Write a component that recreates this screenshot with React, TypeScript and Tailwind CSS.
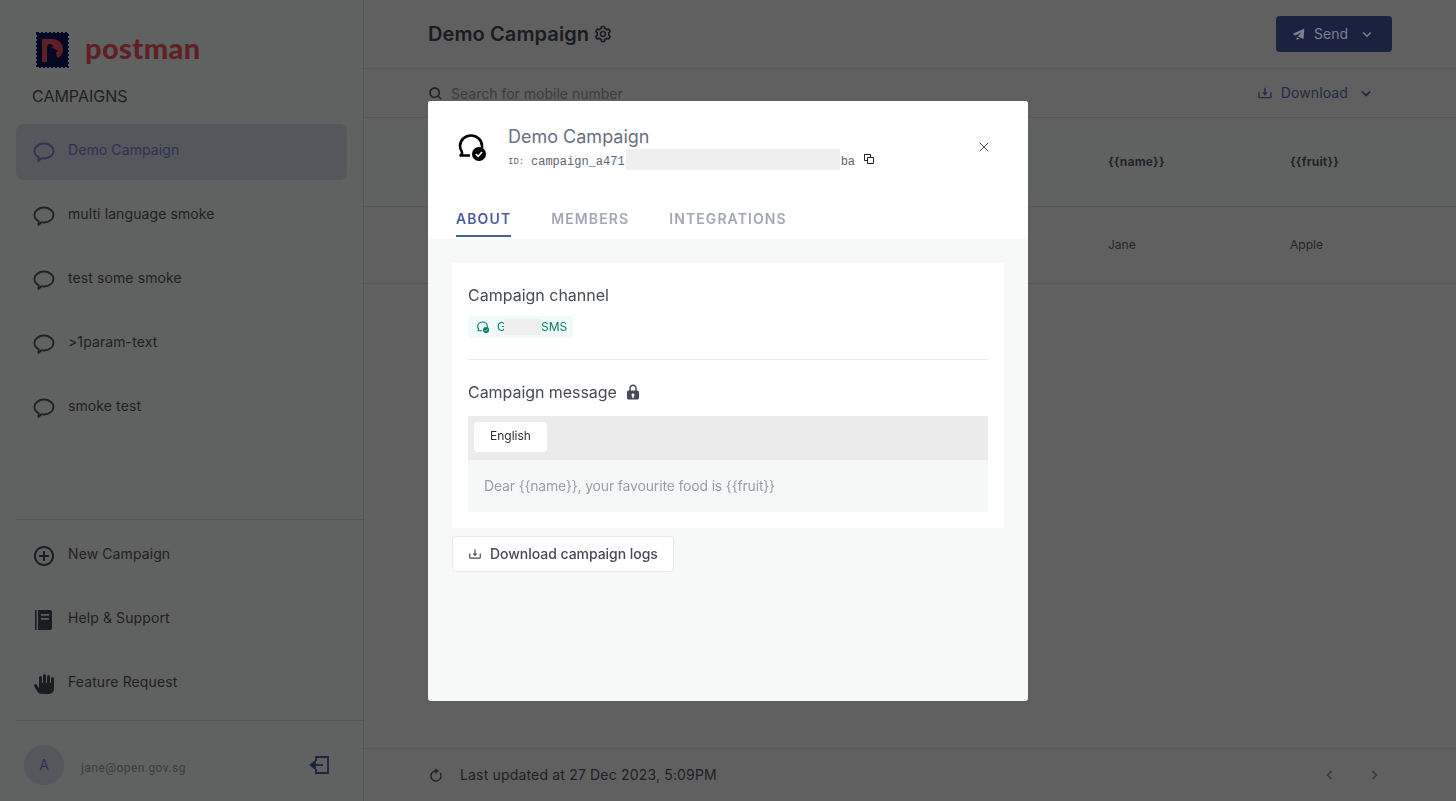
import { X } from "lucide-react"
import { BiChevronDown, BiChevronLeft, BiChevronRight, BiCog, BiCopy, BiDownload, BiPlusCircle, BiRevision, BiSearch, BiSolidHand, BiSolidLock, BiSolidPaperPlane } from "react-icons/bi"

const campaigns = ["Demo Campaign", "multi language smoke", "test some smoke", ">1param-text", "smoke test"]

function Logo() {
  return (
    <div className="flex items-center gap-[16px]">
      <svg width="33" height="36" viewBox="0 0 33 36">
        <rect x="1" y="1" width="31" height="34" fill="#050824" />
        <path d="M1 1h31v34H1z" fill="none" stroke="#050824" strokeWidth="2" strokeDasharray="2 2" />
        <path d="M6 30V7h11a10 10 0 0 1 10 10c0 4-2 8-6 9l-1-6c2 0 2-1 1-2l-3-1c0-3-2-5-4-5s-3 2-3 4v14z" fill="#5f2025" />
        <circle cx="16.500" cy="15.500" r="1" fill="#5f2025" />
      </svg>
      <span className="font-['Lato',sans-serif] text-[29px] leading-none font-black tracking-[0.4px] text-[#5f2025] mb-[6px]">postman</span>
    </div>
  )
}

function BubbleIcon() {
  return (
    <svg width="24" height="24" viewBox="0 0 24 24" fill="none" stroke="currentColor" strokeWidth="1.800" strokeLinejoin="round">
      <path d="M12 3.500c5.300 0 9.500 3.300 9.500 7.500s-4.200 7.500-9.500 7.500c-.9 0-1.800-.1-2.600-.3L6.500 21l.2-3.800C4.100 15.900 2.500 13.600 2.500 11c0-4.200 4.200-7.500 9.500-7.500z" />
    </svg>
  )
}

function ChannelIcon({ size, color, badge }: { size: number; color: string; badge: string }) {
  return (
    <svg width={size} height={size} viewBox="0 0 32 32" fill="none">
      <path d="M14 24.500H4.500c1.400-1.200 1.800-2.400 1.400-3.700C4.700 19 4 16.900 4 15 4 9 9 4.500 15 4.500S26 9 26 15v2" stroke={color} strokeWidth="2.600" strokeLinejoin="round" />
      <circle cx="23" cy="23" r="7" fill={color} />
      <path d="M19.800 23l2.300 2.300 4-4.300" stroke={badge} strokeWidth="1.600" />
    </svg>
  )
}

function NavRow({ label, icon, active }: { label: string; icon: React.ReactNode; active?: boolean }) {
  return (
    <div className={active ? "flex items-center gap-3 h-14 mb-2 mr-4 px-4 rounded-lg bg-[#56575c] text-[#2a3350]" : "flex items-center gap-3 h-14 mb-2 mr-4 px-4 rounded-lg text-[#1f2024]"}>
      {icon}
      <span className="text-sm tracking-[0.1px] pb-1">{label}</span>
    </div>
  )
}

function BookIcon() {
  return (
    <svg width="24" height="24" viewBox="0 0 24 24" fill="#1a1c21">
      <rect x="3" y="2" width="1.600" height="20" />
      <path d="M6 2h12a2 2 0 0 1 2 2v16a2 2 0 0 1-2 2H6z" />
      <rect x="9" y="6" width="8" height="1.700" fill="#5f6261" />
      <rect x="9" y="10" width="8" height="1.700" fill="#5f6261" />
    </svg>
  )
}

function LogoutIcon() {
  return (
    <svg width="24" height="24" viewBox="0 0 24 24" fill="none" stroke="#1c2440" strokeWidth="1.800">
      <path d="M8 8V4h12v16H8v-4" />
      <path d="M15 12H5" />
      <path d="M7 8.500L2.500 12 7 15.500z" fill="#1c2440" />
    </svg>
  )
}

function Sidebar() {
  return (
    <aside className="flex flex-col w-[364px] shrink-0 h-full bg-[#5f6261] border-r border-[#555756] pl-4">
      <div className="flex-1">
        <div className="pt-8 pl-5">
          <Logo />
        </div>
        <div className="pl-4 mt-[16px] mb-4 text-base leading-6 text-[#1f2024]">CAMPAIGNS</div>
        {campaigns.map((name, i) => (
          <NavRow key={name} label={name} active={i === 0} icon={<BubbleIcon />} />
        ))}
      </div>
      <div className="h-[282px] border-t border-[#555756] pt-2">
        <NavRow label="New Campaign" icon={<BiPlusCircle size={24} color="#1a1c21" />} />
        <NavRow label="Help & Support" icon={<BookIcon />} />
        <NavRow label="Feature Request" icon={<BiSolidHand size={24} color="#1a1c21" />} />
        <div className="border-t border-[#555756] pt-6 pl-2 pr-[31px] flex items-center">
          <div className="w-10 h-10 rounded-full bg-[#56575c] text-[#2a3350] text-sm flex items-center justify-center">A</div>
          <span className="ml-[17px] flex-1 font-['Roboto',sans-serif] text-[12px] tracking-[0.45px] text-[#3a3c40] mt-[6px]">jane@open.gov.sg</span>
          <LogoutIcon />
        </div>
      </div>
    </aside>
  )
}

function Main() {
  return (
    <main className="flex flex-col flex-1 h-full bg-[#606060]">
      <header className="flex items-center justify-between h-[69px] px-16 border-b border-[#575757]">
        <div className="flex items-center gap-1">
          <h1 className="text-xl font-semibold tracking-[0.1px] text-[#1a1c23]">Demo Campaign</h1>
          <BiCog size={20} color="#1a1c23" />
        </div>
        <button className="flex items-center justify-center gap-2 w-[116px] h-9 rounded bg-[#1a2240] text-sm text-[#7f8189]">
          <BiSolidPaperPlane size={14} />
          <span>Send</span>
          <BiChevronDown size={18} className="ml-[2px]" />
        </button>
      </header>
      <div className="flex items-center justify-between h-[49px] pt-[2px] pl-16 pr-[80px] border-b border-[#575757]">
        <div className="flex items-center gap-[7px] text-sm text-[#3a3c43]">
          <BiSearch size={16} color="#1a1c23" />
          <span>Search for mobile number</span>
        </div>
        <div className="flex items-center mb-[2px] text-sm tracking-[0.1px] text-[#222a48]">
          <BiDownload size={16} className="mr-2" />
          <span>Download</span>
          <BiChevronDown size={20} className="ml-2" />
        </div>
      </div>
      <div className="grid grid-cols-[744px_182px_1fr] items-center h-[89px] bg-[#5f6261] border-b border-[#575757] text-xs font-bold tracking-[0.2px] text-[#22242b]">
        <span />
        <span>{"{{name}}"}</span>
        <span>{"{{fruit}}"}</span>
      </div>
      <div className="grid grid-cols-[744px_182px_1fr] items-center h-[77px] border-b border-[#575757] text-xs text-[#232428]">
        <span />
        <span>Jane</span>
        <span>Apple</span>
      </div>
      <div className="flex-1" />
      <footer className="flex items-center justify-between h-[53px] pl-16 pr-[72px] border-t border-[#575757]">
        <div className="flex items-center gap-4 text-sm tracking-[0.17px] text-[#1f2024]">
          <BiRevision size={16} />
          <span>Last updated at 27 Dec 2023, 5:09PM</span>
        </div>
        <div className="flex items-center gap-[24px] text-[#3a3c43]">
          <BiChevronLeft size={20} />
          <BiChevronRight size={20} />
        </div>
      </footer>
    </main>
  )
}

function Modal() {
  return (
    <div className="fixed inset-0 flex items-center justify-center pt-px">
      <div className="flex flex-col w-[600px] h-[600px] rounded-[3px] overflow-hidden bg-[#f7f9f8]">
        <div className="h-[138px] bg-white pt-6 pl-7">
          <div className="flex items-start pr-[36px]">
            <div className="w-[52px] h-11 flex items-center">
              <ChannelIcon size={32} color="#000000" badge="#ffffff" />
            </div>
            <div className="flex-1">
              <div className="text-lg leading-6 text-[#6a6f7d]">Demo Campaign</div>
              <div className="flex items-center h-5 font-['Liberation_Mono',monospace] text-xs text-[#5f6470]">
                <span className="text-[9px] w-[23px] mt-[6px]">ID:</span>
                <span className="mt-[6px]">campaign_a471</span>
                <span className="w-[214px] h-[21px] ml-px bg-[#efefef]" />
                <span className="ml-px mt-[6px]">ba</span>
                <BiCopy size={12} className="ml-2 mb-[1px] scale-x-[-1] text-[#1f2128]" />
              </div>
            </div>
            <X size={16} strokeWidth={1.5} className="mt-[14px] text-[#474b55]" />
          </div>
          <div className="flex gap-10 mt-[34px] text-sm font-semibold tracking-[1.1px]">
            <span className="h-[34px] pt-[6px] border-b-2 border-[#4a5f9f] text-[#4a5f9f]">ABOUT</span>
            <span className="h-[34px] pt-[6px] text-[#a3a7b5]">MEMBERS</span>
            <span className="h-[34px] pt-[6px] text-[#a3a7b5]">INTEGRATIONS</span>
          </div>
        </div>
        <div className="flex-1 px-6 pt-6">
          <div className="bg-white px-4 pt-5 pb-4">
            <div className="text-base leading-6 text-[#474b55]">Campaign channel</div>
            <div className="flex items-center w-[105px] h-[22px] mt-[9px] pl-[8px] rounded bg-[#f0faf8] text-xs text-[#0f7a6c]">
              <ChannelIcon size={14} color="#0f7a6c" badge="#f0faf8" />
              <span className="ml-[7px]">G</span>
              <span className="w-[37px] h-4 ml-[-2px] bg-[#efefef]" />
              <span>SMS</span>
            </div>
            <div className="mt-[21px] mb-5 border-t border-[#e8e9e9]" />
            <div className="flex items-center gap-[7px] text-base leading-6 text-[#474b55]">
              <span className="tracking-[-0.05px]">Campaign message</span>
              <BiSolidLock size={18} />
            </div>
            <div className="mt-3 h-11 bg-[#ebebeb] p-[6px]">
              <div className="w-[73px] h-[30px] pb-[2px] rounded bg-white flex items-center justify-center text-xs text-[#2b2d31]">English</div>
            </div>
            <div className="h-[52px] flex items-center px-4 bg-[#f6f8f8] text-sm tracking-[-0.17px] text-[#9a9ea9]">Dear {"{{name}}"}, your favourite food is {"{{fruit}}"}</div>
          </div>
          <button className="flex items-center gap-2 h-9 w-[222px] mt-2 pl-[15px] rounded bg-white border border-[#e8e9e9] text-sm font-medium tracking-[-0.04px] text-[#474b55]">
            <BiDownload size={14} />
            <span>Download campaign logs</span>
          </button>
        </div>
      </div>
    </div>
  )
}

export default function App() {
  return (
    <div className="flex w-full h-screen overflow-hidden font-['Inter',sans-serif]">
      <Sidebar />
      <Main />
      <Modal />
    </div>
  )
}
